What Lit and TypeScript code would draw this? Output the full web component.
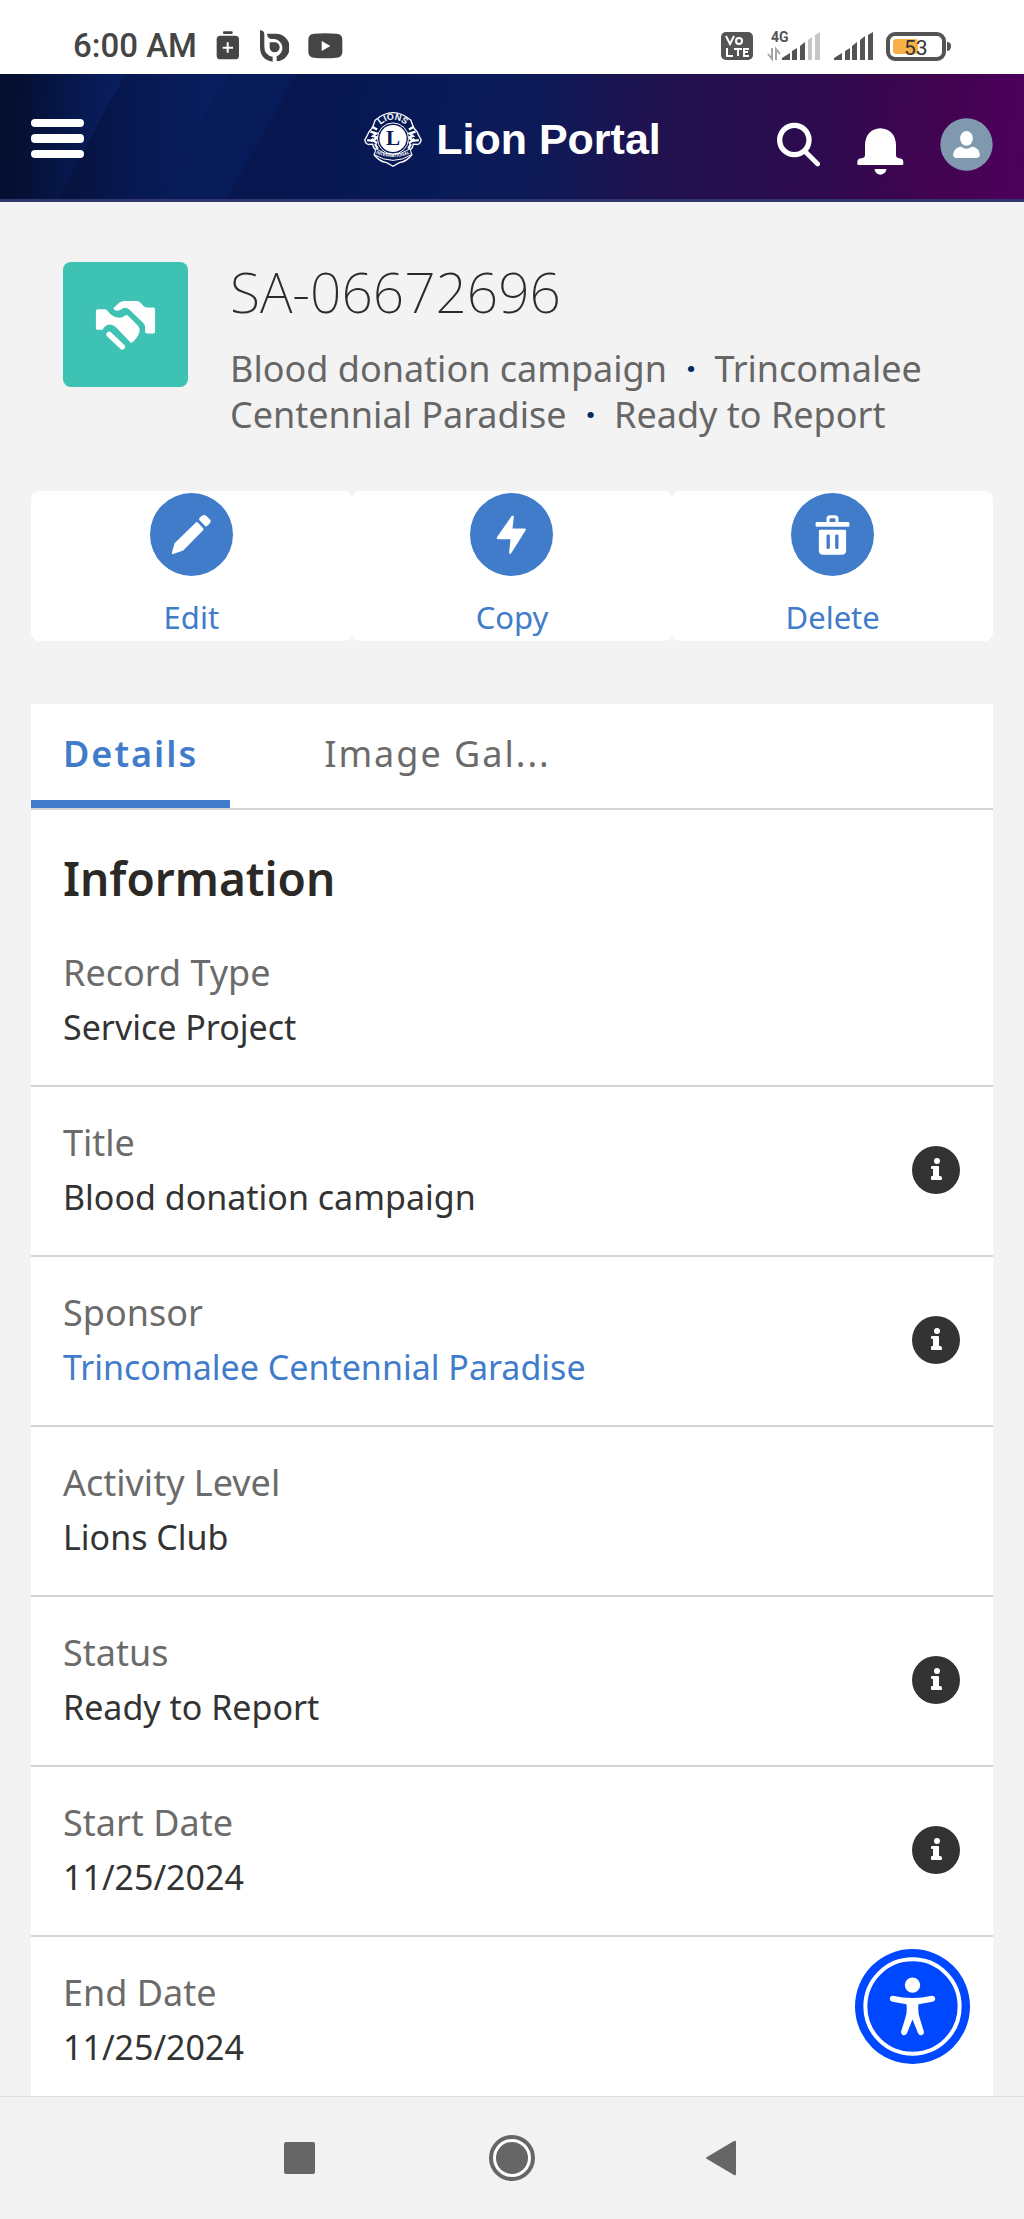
import { LitElement, html, css, svg, nothing } from "lit";
import { customElement, property, state } from "lit/decorators.js";

const FONT = css`"Noto Sans", "Open Sans", "Liberation Sans", sans-serif`;

interface Field {
  label: string;
  value: string;
  link?: boolean;
  info?: boolean;
}

const FIELDS: Field[] = [
  { label: "Record Type", value: "Service Project" },
  { label: "Title", value: "Blood donation campaign", info: true },
  { label: "Sponsor", value: "Trincomalee Centennial Paradise", link: true, info: true },
  { label: "Activity Level", value: "Lions Club" },
  { label: "Status", value: "Ready to Report", info: true },
  { label: "Start Date", value: "11/25/2024", info: true },
  { label: "End Date", value: "11/25/2024" },
];

/* Phone status bar */
@customElement("status-bar")
class StatusBar extends LitElement {
  static styles = css`
    :host {
      display: block;
      background: #fff;
    }
    .bar {
      display: flex;
      align-items: center;
      justify-content: space-between;
      box-sizing: border-box;
      height: 74px;
      padding: 18px 72px 0 73px;
      color: #454545;
      font-family: Roboto, "Liberation Sans", sans-serif;
    }
    .side {
      display: flex;
      align-items: center;
    }
    .left {
      gap: 19px;
    }
    .right {
      gap: 13px;
    }
    .time {
      font-size: 33px;
      font-weight: 500;
      line-height: 40px;
      white-space: nowrap;
    }
    svg {
      display: block;
    }
    .tiny {
      font-family: Roboto, "Liberation Sans", sans-serif;
      font-weight: 700;
    }
    .level {
      font-family: Roboto, "Liberation Sans", sans-serif;
      font-weight: 400;
    }
  `;

  render() {
    return html`
      <div class="bar">
        <div class="side left">
          <span class="time">6:00 AM</span>
          <svg width="24" height="32" viewBox="650 90 72 96">
            <rect x="671" y="94" width="29" height="8" rx="3" fill="#454545" />
            <rect x="652" y="107" width="67" height="71" rx="11" fill="#454545" />
            <path d="M685 127v31M670 143h31" stroke="#fff" stroke-width="6" />
          </svg>
          <svg width="30" height="32" viewBox="782 90 90 96" fill="none">
            <path d="M785 91q13 0 13 13v36q0 25 25 30v15q-38-6-38-45z" fill="#454545" />
            <path d="M806 101h24a41 41 0 0 1 5 83v-15a27 27 0 0 0-7-52h-9q-12-2-13-16z" fill="#454545" />
            <path d="M814 127h14a15 15 0 1 1-14 15z" fill="#454545" />
          </svg>
          <svg width="35" height="26" viewBox="918 98 105 78">
            <path d="M936 100q34-3 68 0q17 1 17 18v36q0 17-17 18q-34 3-68 0q-17-1-17-18v-36q0-17 17-18z" fill="#454545" />
            <path d="M959 122l26 15l-26 15z" fill="#fff" />
          </svg>
        </div>
        <div class="side right">
          <svg width="32" height="28" viewBox="0 0 32 28">
            <rect width="32" height="28" rx="5" fill="#545454" />
            <path d="M5 4l4 8l4-8M6 16v8h6M13 17h8M17 17v7M28 17h-5v7h5M23 20h4" fill="none" stroke="#fff" stroke-width="2" />
            <circle cx="18" cy="9" r="3" fill="none" stroke="#fff" stroke-width="2" />
          </svg>
          <svg width="54" height="32" viewBox="766 30 54 32">
            <text class="tiny" x="771" y="42" font-size="14" fill="#545454">4G</text>
            <path d="M772 48v11l-4-5M776 60v-11l4 5" fill="none" stroke="#a5a5a5" stroke-width="2" />
            <path d="M782 60v-2l8-5v7z" fill="#545454" />
            <path d="M792 60v-9l5-3v12zM800 60v-14l5-4v18z" fill="#545454" />
            <path d="M808 60v-20l4-3v23zM815 60v-25l5-3v28z" fill="#c6c6c6" />
          </svg>
          <svg width="40" height="32" viewBox="832 30 40 32">
            <path d="M833 60v-2l8-5v7zM844 60v-9l5-3v12zM851 60v-14l5-4v18zM859 60v-20l5-4v24zM867 60v-25l5-3v28z" fill="#545454" />
          </svg>
          <svg width="66" height="32" viewBox="886 30 66 32">
            <rect x="888" y="34" width="56" height="25" rx="7" fill="#fff" stroke="#545454" stroke-width="4" />
            <rect x="893" y="39" width="25" height="15" rx="3" fill="#f7b146" />
            <path d="M947 42q4 0 4 4q0 5-4 5z" fill="#545454" />
            <text class="level" x="904" y="55" font-size="21" fill="#333">53</text>
          </svg>
        </div>
      </div>
    `;
  }
}

/* Portal header with menu, brand and tools */
@customElement("portal-header")
class PortalHeader extends LitElement {
  static styles = css`
    :host {
      display: block;
    }
    .header {
      position: relative;
      display: grid;
      grid-template-columns: 1fr auto 1fr;
      align-items: center;
      box-sizing: border-box;
      height: 128px;
      padding: 5px 31px 0;
      border-bottom: 3px solid #30366b;
      background: linear-gradient(95deg, #050e2e 0%, #07164a 12%, #071650 30%, #071a57 42%, #0d1a58 52%, #20124f 64%, #2e0a4e 80%, #41034f 91%, #4e005c 100%);
      overflow: hidden;
    }
    .rays {
      position: absolute;
      inset: 0;
      width: 320px;
      height: 100%;
    }
    .icon-button {
      display: block;
      position: relative;
      padding: 0;
      border: 0;
      background: none;
      cursor: pointer;
    }
    svg {
      display: block;
    }
    .brand {
      position: relative;
      display: flex;
      align-items: center;
      gap: 13px;
      color: #fff;
      font-family: "Liberation Sans", Arial, sans-serif;
      font-size: 43px;
      font-weight: 700;
      line-height: 56px;
      text-decoration: none;
      white-space: nowrap;
    }
    .tools {
      display: flex;
      align-items: center;
      justify-content: flex-end;
      gap: 36px;
      padding-top: 10px;
    }
    .bell {
      padding-top: 14px;
    }
    .ring-text {
      font-family: "Liberation Sans", Arial, sans-serif;
      font-weight: 700;
      fill: #fff;
    }
    .monogram {
      font-family: "Liberation Serif", "Times New Roman", serif;
      font-weight: 700;
      fill: #0a1a58;
    }
  `;

  render() {
    return html`
      <header class="header">
        <svg class="rays" viewBox="0 0 320 125" preserveAspectRatio="none" aria-hidden="true">
          <defs>
            <linearGradient id="ray"><stop offset="0.2" stop-color="#0a2470" stop-opacity="0" /><stop offset="1" stop-color="#0a2470" stop-opacity="0.6" /></linearGradient>
          </defs>
          <path d="M0 0h125l-67 125h-58z" fill="url(#ray)" />
          <path d="M125 0h103l-68 125h-102z" fill="url(#ray)" />
          <path d="M228 0h69l-70 125h-67z" fill="#0a2470" opacity="0.35" />
        </svg>
        <button class="icon-button" aria-label="Menu">
          <svg width="53" height="42" viewBox="0 0 53 42" fill="#fff">
            <rect y="1" width="53" height="8" rx="4" />
            <rect y="16" width="53" height="9" rx="4" />
            <rect y="32" width="53" height="8" rx="4" />
          </svg>
        </button>
        <a class="brand" href="#home">
          <svg width="60" height="57" viewBox="44 64 180 172" fill="none" stroke="#fff" aria-hidden="true">
            <defs>
              <path id="top-arc" d="M84 128a52 52 0 0 1 100 0" />
              <path id="bottom-arc" d="M78 190q56 26 112 0" />
            </defs>
            <path d="M80 92q54-46 108 0l5 14q4 12 13 20q5 12 13 25q-2 12-11 14l-13-1q-1 14 -12 18l8 14q-15 20-38 24l-19 11l-19-11q-23-4-38-24l8-14q-11-4-12-18l-13 1q-9-2-11-14q8-13 13-25q9-8 13-20z" stroke-width="4" />
            <path d="M66 126l18 6l-10 8l12 4l-12 10l-18-2M202 126l-18 6l10 8l-12 4l12 10l18-2M72 112l14 8M196 112l-14 8M70 148l16 14M198 148l-16 14M80 164l8 14M188 164l-8 14" stroke-width="7" />
            <circle cx="134" cy="147" r="47" stroke-width="3" fill="#0a1a58" />
            <circle cx="134" cy="147" r="41" fill="#fff" stroke="none" />
            <path d="M82 178q52 34 104 0l4 18q-56 34-112 0z" stroke-width="3" fill="#0a1a58" />
            <text class="monogram" x="134" y="168" font-size="64" text-anchor="middle" stroke="none">L</text>
            <text class="ring-text" font-size="27" text-anchor="middle" stroke="none"><textPath href="#top-arc" startOffset="50%">LIONS</textPath></text>
            <text class="ring-text" font-size="13" text-anchor="middle" stroke="none"><textPath href="#bottom-arc" startOffset="50%">INTERNATIONAL</textPath></text>
          </svg>
          <span>Lion Portal</span>
        </a>
        <div class="tools">
          <button class="icon-button" aria-label="Search">
            <svg width="45" height="45" viewBox="785 364 135 135" fill="none" stroke="#fff" stroke-linecap="round">
              <circle cx="840" cy="418" r="44" stroke-width="16" />
              <path d="M874 454l36 36" stroke-width="14" />
            </svg>
          </button>
          <button class="icon-button bell" aria-label="Notifications">
            <svg width="47" height="47" viewBox="1031 384 141 141" fill="#fff">
              <path d="M1101 385q46 4 47 52v28q0 8 9 10q13 1 13 11v6q0 3-4 3h-130q-4 0-4-3v-6q0-10 13-11q10-2 10-10v-28q1-48 46-52z" />
              <path d="M1087 507h29q5 0 3 4q-6 13-18 13t-17-13q-2-4 3-4z" />
            </svg>
          </button>
          <button class="icon-button" aria-label="Profile">
            <svg width="53" height="53" viewBox="1282 352 158 158" fill="#fff">
              <circle cx="1361" cy="431" r="78" fill="#8199af" />
              <ellipse cx="1361" cy="413" rx="19" ry="22" />
              <path d="M1341 438q5-1 8 2q12 7 24 0q3-3 8-2q19 5 20 25q-1 7-8 8h-64q-7-1-8-8q1-20 20-25z" />
            </svg>
          </button>
        </div>
      </header>
    `;
  }
}

/* Record title, summary and quick actions */
@customElement("record-header")
class RecordHeader extends LitElement {
  static styles = css`
    :host {
      display: block;
      font-family: ${FONT};
    }
    .summary {
      display: flex;
      align-items: flex-start;
      gap: 42px;
      padding: 0 32px;
    }
    .tile {
      display: block;
      flex: none;
      border-radius: 8px;
      background: #3dc2b3;
    }
    .title {
      margin: 0 0 24px;
      color: #2b2b2b;
      font-size: 55px;
      font-weight: 200;
      line-height: 60px;
    }
    .subtitle {
      margin: 0;
      color: #666;
      font-size: 36px;
      line-height: 46px;
    }
    .dot {
      padding: 0 9px 0 19px;
      color: #032d60;
      font-weight: 700;
    }
    .actions {
      display: grid;
      grid-template-columns: repeat(3, 1fr);
      margin-top: 53px;
    }
    .action {
      display: flex;
      flex-direction: column;
      align-items: center;
      gap: 17px;
      padding: 2px 0 0;
      border: 0;
      border-radius: 8px;
      background: #fff;
      color: #417ccb;
      font-family: inherit;
      font-size: 31px;
      line-height: 48px;
      cursor: pointer;
    }
    .action svg {
      display: block;
    }
  `;

  private actions = [
    {
      label: "Edit",
      icon: svg`<path d="M180 98l8-6q6-4 12 1l10 10q6 6 0 12l-7 8q-4 4-8 0l-16-17q-3-4 1-8z" /><path d="M168 113q3-3 6 0l16 17q3 3 0 6l-60 61l-28 10q-8 3-6-4l8-28z" />`,
    },
    {
      label: "Copy",
      icon: svg`<path d="M155 94q7-6 7 2l-4 35h36q6 1 3 6l-42 67q-8 8-7-2l4-39h-38q-6-2-2-7z" />`,
    },
    {
      label: "Delete",
      icon: svg`<path fill-rule="evenodd" d="M137 111v-10q1-10 11-10h14q10 0 11 10v10h29q4 0 4 4v7q0 4-4 4h-94q-4 0-4-4v-7q0-4 4-4zM146 111h18v-8q0-3-3-3h-12q-3 0-3 3z" /><path fill-rule="evenodd" d="M118 135h74q4 0 4 4v59q-1 12-12 12h-58q-11 0-12-12v-59q0-4 4-4zM137 152v38q0 3 5 3t5-3v-38q0-3-5-3t-5 3zM163 152v38q0 3 5 3t5-3v-38q0-3-5-3t-5 3z" />`,
    },
  ];

  render() {
    return html`
      <div class="summary">
        <svg class="tile" width="125" height="125" viewBox="8 20 376 376" fill="#fff" aria-hidden="true">
          <path d="M160 158L178 142Q184 137 192 137H232Q238 138 242 143L252 154Q256 157 260 157H280Q285 157 285 163V228Q285 235 279 235H261Q255 235 255 230V215Q254 208 248 202L208 164Q196 153 187 160Q172 172 162 163Q158 160 160 158z" />
          <path d="M112 162H134Q138 162 141 166Q158 190 185 187L196 180Q200 178 203 181L234 212Q240 220 238 230Q232 250 216 262Q212 264 209 260L168 217Q150 200 134 214L128 222Q126 224 122 224H112Q107 224 107 219V167Q107 162 112 162z" />
          <path d="M147 238L186 275" fill="none" stroke="#fff" stroke-width="17" stroke-linecap="round" />
        </svg>
        <div>
          <h1 class="title">SA-06672696</h1>
          <p class="subtitle">Blood donation campaign<span class="dot">·</span> Trincomalee Centennial Paradise<span class="dot">·</span> Ready to Report</p>
        </div>
      </div>
      <div class="actions">
        ${this.actions.map(
          (a) => html`
            <button class="action">
              <svg width="83" height="83" viewBox="30 24 250 250" fill="#fff" aria-hidden="true">
                <circle cx="155" cy="149" r="125" fill="#417ccb" />
                ${a.icon}
              </svg>
              <span>${a.label}</span>
            </button>
          `
        )}
      </div>
    `;
  }
}

/* One label and value pair */
@customElement("record-field")
class RecordField extends LitElement {
  @property({ attribute: false }) field!: Field;

  static styles = css`
    :host {
      display: block;
      padding-bottom: 12px;
      border-bottom: 2px solid #d4d4d4;
    }
    :host(:last-of-type) {
      padding-bottom: 0;
      border-bottom: 0;
    }
    .row {
      display: flex;
      align-items: center;
      justify-content: space-between;
      padding: 30px 32px 20px;
      font-family: ${FONT};
    }
    .pair {
      display: flex;
      flex-direction: column;
      gap: 2px;
      margin: 0;
      line-height: 52px;
    }
    .label {
      color: #6b6b6b;
      font-size: 36px;
    }
    .value {
      margin: 0;
      color: #333;
      font-size: 34px;
    }
    .link {
      color: #417ccb;
      text-decoration: none;
    }
    .info {
      flex: none;
      padding: 0;
      border: 0;
      background: none;
      cursor: pointer;
    }
    .info svg {
      display: block;
    }
  `;

  render() {
    const f = this.field;
    return html`
      <div class="row">
        <dl class="pair">
          <dt class="label">${f.label}</dt>
          <dd class="value">${f.link ? html`<a class="link" href="#sponsor">${f.value}</a>` : f.value}</dd>
        </dl>
        ${f.info
          ? html`<button class="info" aria-label="Help for ${f.label}">
              <svg width="49" height="49" viewBox="0 0 49 49" fill="#fff">
                <circle cx="24" cy="24" r="24" fill="#333" />
                <circle cx="25" cy="15" r="3" />
                <path d="M20 20h6q1 0 1 1v9h1q2 0 2 2v1q0 1-1 1h-9q-1 0-1-1v-2q0-1 1-1h1v-7h-1q-1 0-1-1v-1q0-1 1-1z" />
              </svg>
            </button>`
          : nothing}
      </div>
    `;
  }
}

/* Tabbed details card */
@customElement("record-details")
class RecordDetails extends LitElement {
  @state() private selected = 0;

  static styles = css`
    :host {
      display: block;
      background: #fff;
      font-family: ${FONT};
    }
    .tabs {
      display: flex;
      gap: 62px;
      border-bottom: 2px solid #d4d4d4;
    }
    .tab {
      padding: 4px 32px 0;
      border: 0;
      border-bottom: 8px solid transparent;
      background: none;
      color: #6b6b6b;
      font-family: inherit;
      font-size: 36px;
      letter-spacing: 2px;
      line-height: 92px;
      cursor: pointer;
    }
    .tab.selected {
      border-bottom-color: #417ccb;
      color: #417ccb;
      font-weight: 600;
    }
    .section {
      margin: 0;
      padding: 38px 32px 9px;
      color: #2b2826;
      font-size: 46px;
      font-weight: 600;
      line-height: 60px;
    }
  `;

  render() {
    return html`
      <div class="tabs" role="tablist">
        ${["Details", "Image Gal..."].map(
          (name, i) => html`<button
            class="tab ${i === this.selected ? "selected" : ""}"
            role="tab"
            aria-selected=${i === this.selected}
            @click=${() => (this.selected = i)}
          >${name}</button>`
        )}
      </div>
      <h2 class="section">Information</h2>
      ${FIELDS.map((f) => html`<record-field .field=${f}></record-field>`)}
    `;
  }
}

/* Phone navigation bar */
@customElement("system-nav")
class SystemNav extends LitElement {
  static styles = css`
    :host {
      display: block;
      border-top: 1px solid #dedede;
      background: #f2f2f2;
    }
    .nav {
      display: flex;
      padding: 36px 19%;
    }
    .key {
      display: flex;
      flex: 1;
      justify-content: center;
      padding: 0;
      border: 0;
      background: none;
      cursor: pointer;
    }
  `;

  render() {
    return html`
      <nav class="nav">
        <button class="key" aria-label="Recent apps">
          <svg width="50" height="50" viewBox="0 0 50 50"><rect x="9" y="9" width="31" height="32" rx="2" fill="#666" /></svg>
        </button>
        <button class="key" aria-label="Home">
          <svg width="50" height="50" viewBox="0 0 50 50">
            <circle cx="25" cy="25" r="21" fill="#fff" stroke="#666" stroke-width="4" />
            <circle cx="25" cy="25" r="16" fill="#666" />
          </svg>
        </button>
        <button class="key" aria-label="Back">
          <svg width="50" height="50" viewBox="0 0 50 50"><path d="M8 24L35 8q2-1 2 1v32q0 2-2 1L8 26q-2-1 0-2z" fill="#666" /></svg>
        </button>
      </nav>
    `;
  }
}

@customElement("app-root")
class AppRoot extends LitElement {
  static styles = css`
    :host {
      display: flex;
      flex-direction: column;
      min-height: 100vh;
      background: #f3f3f3;
    }
    .content {
      position: relative;
      display: flex;
      flex: 1;
      flex-direction: column;
      gap: 63px;
      padding: 60px 31px 0;
    }
    .details {
      flex: 1;
    }
    .accessibility {
      position: absolute;
      right: 54px;
      bottom: 32px;
      padding: 0;
      border: 0;
      background: none;
      cursor: pointer;
    }
    .accessibility svg {
      display: block;
    }
  `;

  render() {
    return html`
      <status-bar></status-bar>
      <portal-header></portal-header>
      <main class="content">
        <record-header></record-header>
        <record-details class="details"></record-details>
        <button class="accessibility" aria-label="Accessibility options">
          <svg width="115" height="115" viewBox="166 147 344 344" fill="#fff">
            <circle cx="338" cy="319" r="172" fill="#0048ff" />
            <circle cx="338" cy="319" r="141" fill="none" stroke="#fff" stroke-width="12" />
            <circle cx="338" cy="255" r="23" />
            <path d="M279 287Q338 300 396 287Q406 288 406 297Q405 304 398 305L356 312Q353 335 360 355L372 394Q373 402 366 405Q358 406 355 400L338 358L321 400Q318 406 310 405Q303 402 304 394L316 355Q323 335 320 312L278 305Q270 303 270 296Q270 288 279 287z" />
          </svg>
        </button>
      </main>
      <system-nav></system-nav>
    `;
  }
}
